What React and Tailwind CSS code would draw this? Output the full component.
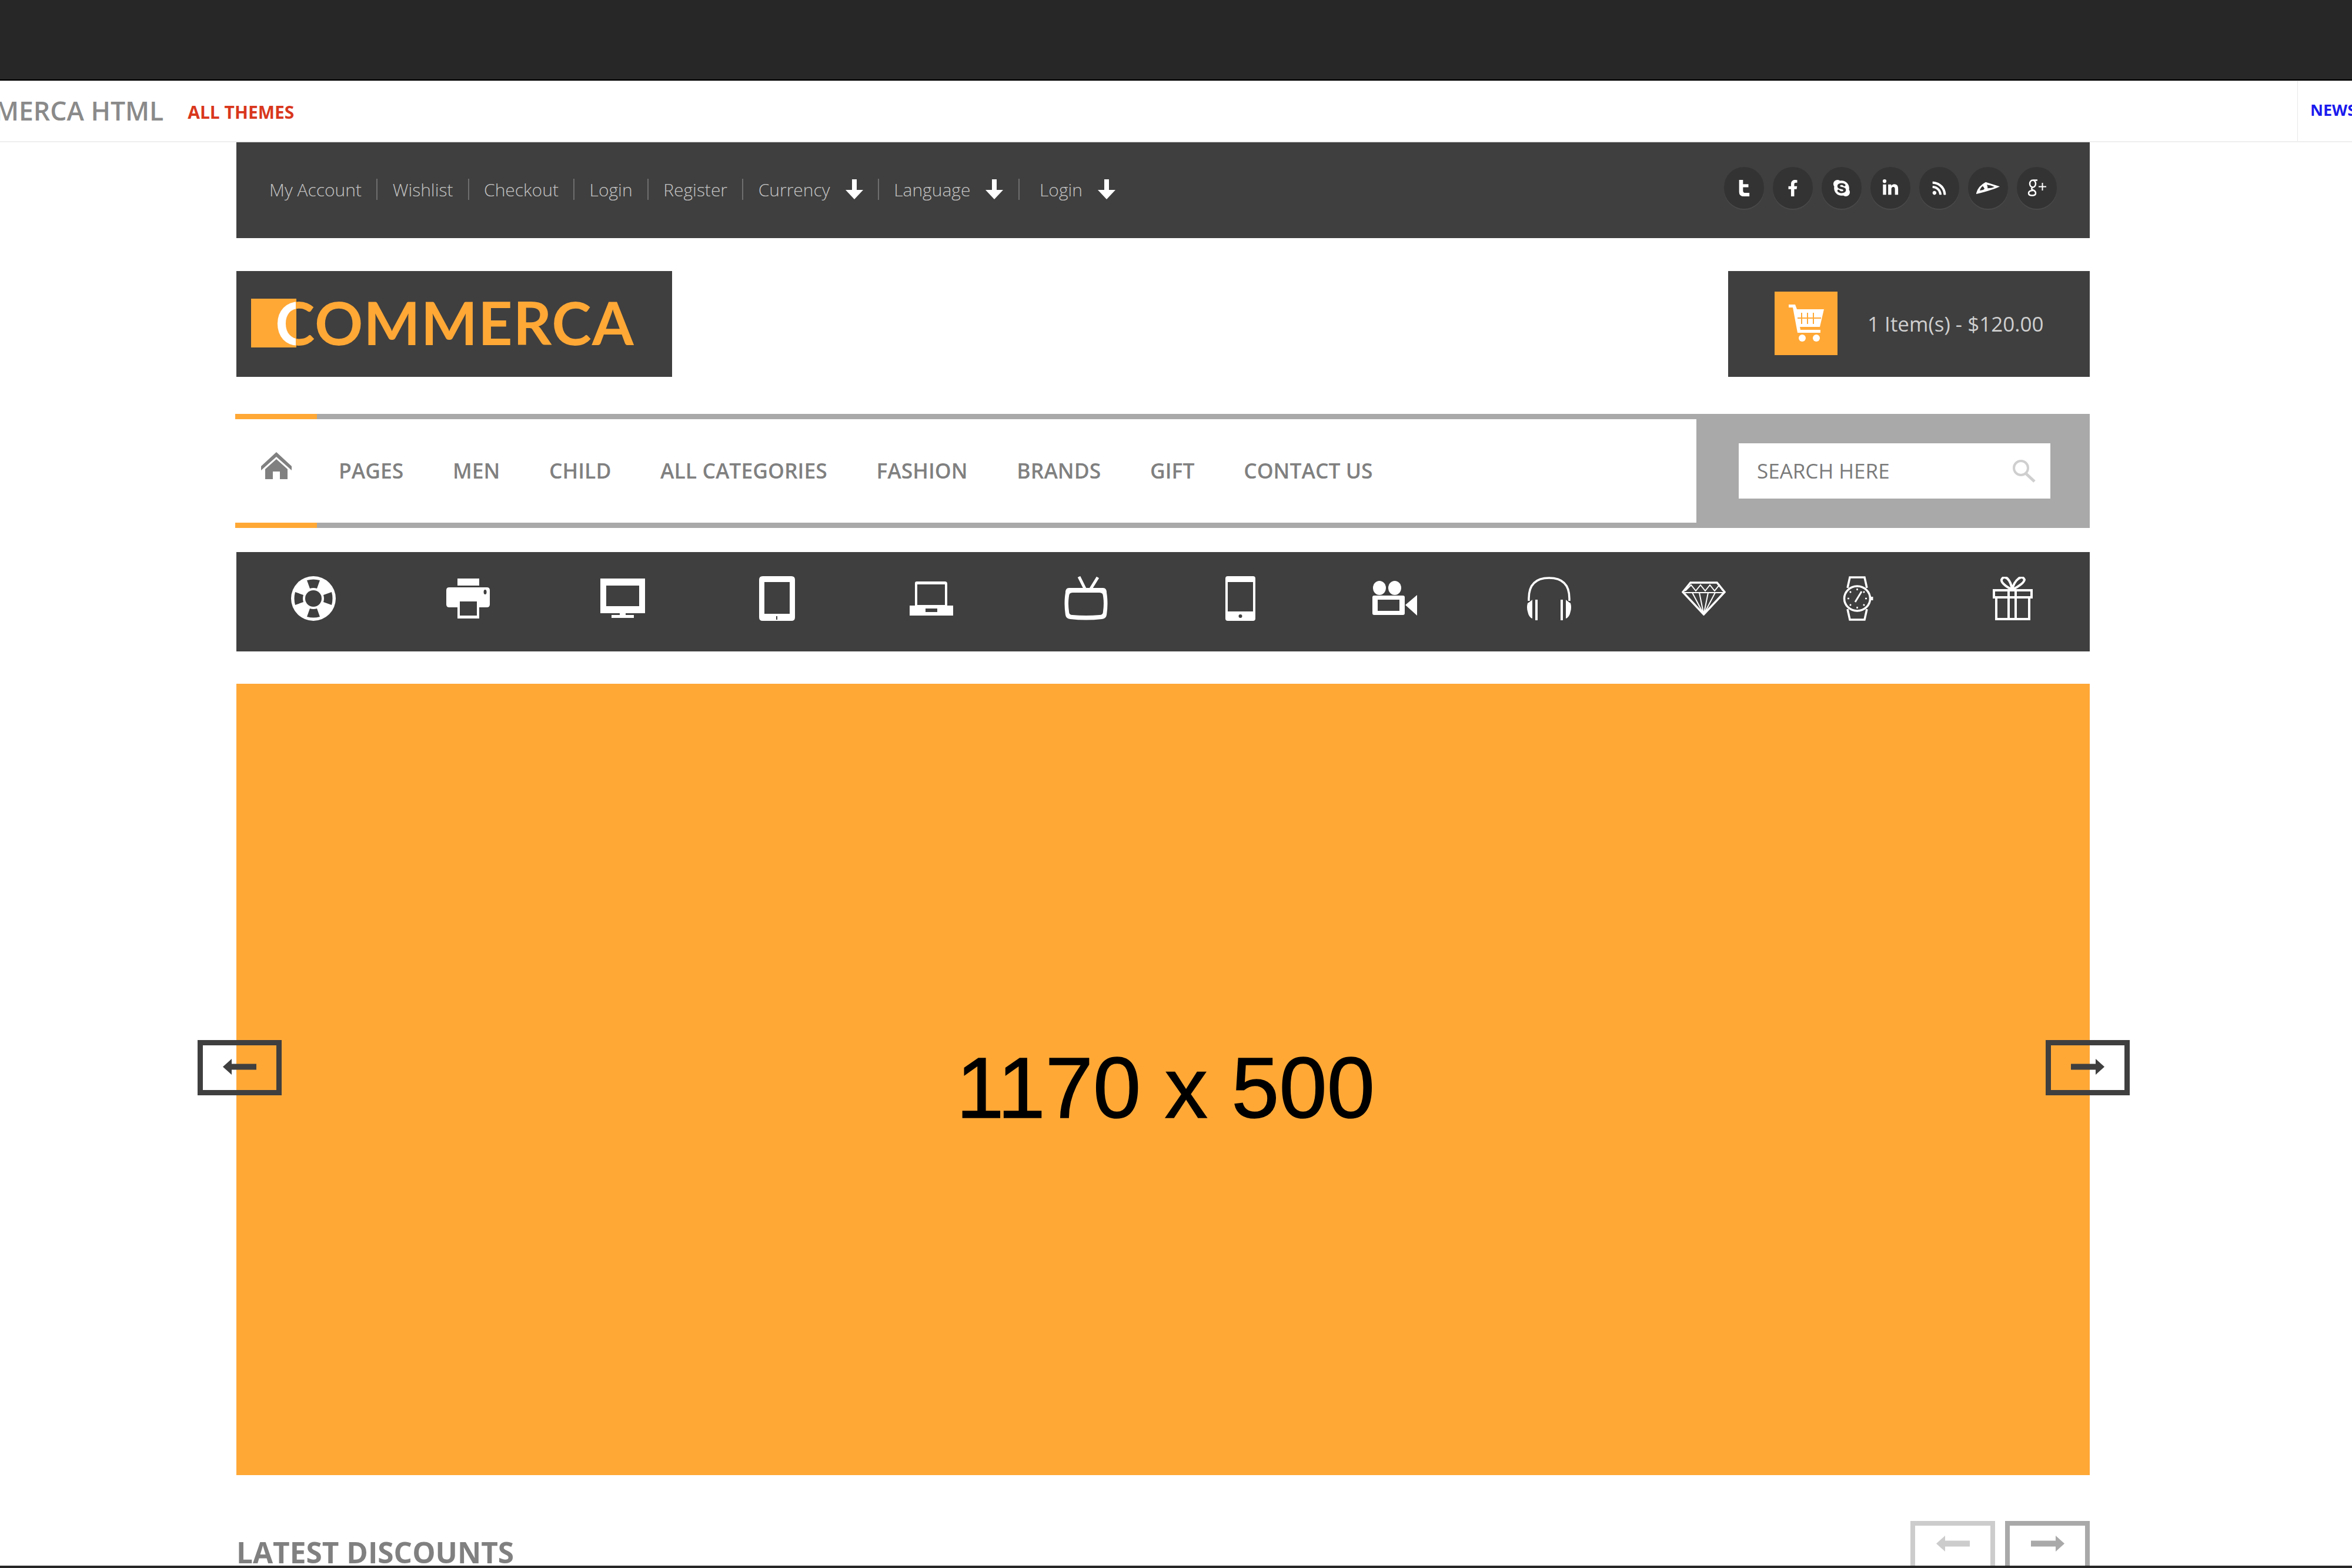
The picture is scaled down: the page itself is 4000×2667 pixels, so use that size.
import React from "react"
import { FaFacebookF, FaLinkedinIn, FaRss, FaSkype } from "react-icons/fa"

const dark = "#3f3f3f"

const TwitterT = () => (
    <svg width="20" height="28" viewBox="0 0 24 38" fill="#fff" preserveAspectRatio="none">
        <path d="M2 0 H10 V10 H21 V17 H10 V25 Q10 30 15 30 H23 V38 H12 Q2 38 2 28 Z" />
    </svg>
)

const PlaneGlyph = () => (
    <svg width="40" height="21" viewBox="0 0 40 28" fill="#fff" preserveAspectRatio="none">
        <path fillRule="evenodd" d="M0 26 Q3 10 16 1 L40 11 Q30 18 0 28 Z M6 20 Q13 19 14 16 Q12 11 11 10 Q7 14 6 20 Z M18 7 Q20 13 19 15 Q26 15 31 12 Q25 8 18 7 Z" />
    </svg>
)

const GooglePlus = () => (
    <svg width="33" height="29" viewBox="0 0 33 29" fill="none" stroke="#fff" strokeWidth="2.5">
        <ellipse cx="9" cy="7.5" rx="5" ry="6" />
        <path d="M9 14 Q5 16 9 18 Q14 20 14 23.5 Q14 27.5 8 27.5 Q2 27.5 2 23.5 Q2 19.5 9 19" />
        <path d="M10 1.5 H17" />
        <path d="M19 12.5 H32 M25.5 6 V19" strokeWidth="2" />
    </svg>
)

const DownArrow = () => (
    <svg width="30" height="34" viewBox="0 0 30 34" fill="#fff">
        <path d="M11 0 H19 V18 H30 L15 34 L0 18 H11 Z" />
    </svg>
)

const SlideArrow = ({ right, className }) => (
    <svg width="57" height="27" viewBox="0 0 57 27" fill="currentColor" className={className}>
        <path d={right ? "M57 13.5 L42 0 V8.5 H0 V18.5 H42 V27 Z" : "M0 13.5 L15 0 V8.5 H57 V18.5 H15 V27 Z"} />
    </svg>
)

const socials = [
    <TwitterT key="t" />,
    <FaFacebookF key="f" size={28} color="#fff" />,
    <FaSkype key="s" size={32} color="#fff" />,
    <FaLinkedinIn key="l" size={30} color="#fff" />,
    <FaRss key="r" size={26} color="#fff" />,
    <PlaneGlyph key="p" />,
    <GooglePlus key="g" />,
]

const links = ["My Account", "Wishlist", "Checkout", "Login", "Register"]
const menu = ["PAGES", "MEN", "CHILD", "ALL CATEGORIES", "FASHION", "BRANDS", "GIFT", "CONTACT US"]

const iconRow = [
    // lifebuoy
    <svg key="buoy" width="76" height="76" viewBox="0 0 76 76">
        <circle cx="38" cy="38" r="38" fill="#fff" />
        <circle cx="38" cy="38" r="14" fill={dark} />
        {[0, 90, 180, 270].map((r) => (
            <path key={r} transform={`rotate(${r} 38 38)`} d="M27 7 Q38 4 49 7 L44 21 Q38 19 32 21 Z" fill={dark} />
        ))}
    </svg>,
    // printer
    <svg key="print" width="74" height="68" viewBox="0 0 74 68" fill="#fff">
        <rect x="19" y="0" width="37" height="12" />
        <path fillRule="evenodd" d="M5 15 H69 Q74 15 74 20 V44 Q74 49 69 49 H5 Q0 49 0 44 V20 Q0 15 5 15 Z M66 19 A2.5 4 0 1 0 66.1 27 A2.5 4 0 1 0 66 19 Z" />
        <rect x="19" y="38" width="37" height="30" fill="#fff" />
        <rect x="23" y="39" width="29" height="24" fill={dark} />
    </svg>,
    // monitor
    <svg key="monitor" width="76" height="67" viewBox="0 0 76 67" fill="#fff">
        <path fillRule="evenodd" d="M0 0 H76 V59 H0 Z M10 12 V47 H66 V12 Z" />
        <rect x="33" y="59" width="10" height="4" />
        <rect x="19" y="62" width="38" height="5" />
    </svg>,
    // tablet
    <svg key="tablet" width="61" height="76" viewBox="0 0 61 76" fill="#fff">
        <path fillRule="evenodd" d="M6 0 H55 Q61 0 61 6 V70 Q61 76 55 76 H6 Q0 76 0 70 V6 Q0 0 6 0 Z M9 10 V64 H52 V10 Z" />
        <rect x="29" y="68" width="2" height="6" fill={dark} />
    </svg>,
    // laptop
    <svg key="laptop" width="74" height="58" viewBox="0 0 74 58" fill="#fff">
        <path fillRule="evenodd" d="M12 0 H60 Q64 0 64 4 V41 H9 V3 Q9 0 12 0 Z M13 5 V40 H60 V5 Z" />
        <path fillRule="evenodd" d="M0 41 H74 V58 H0 Z M27 46 V52 H47 V46 Z" />
    </svg>,
    // tv
    <svg key="tv" width="74" height="75" viewBox="0 0 74 75">
        <path d="M25 1 L36 23 M57 2 L44 23" stroke="#fff" strokeWidth="5" fill="none" />
        <path fillRule="evenodd" fill="#fff" d="M8 20 H66 Q72 20 72 28 Q75 46 72 66 Q71 72 64 73 Q37 76 10 73 Q3 72 2 66 Q-1 46 2 28 Q2 20 8 20 Z M14 28 Q8 28 8 34 Q6 46 8 60 Q8 66 14 66 Q37 68 60 66 Q66 66 66 60 Q68 46 66 34 Q66 28 60 28 Z" />
    </svg>,
    // phone
    <svg key="phone" width="51" height="76" viewBox="0 0 51 76" fill="#fff">
        <path fillRule="evenodd" d="M4 0 H47 Q51 0 51 4 V72 Q51 76 47 76 H4 Q0 76 0 72 V4 Q0 0 4 0 Z M4 10 V60 H47 V10 Z" />
        <circle cx="25.5" cy="68" r="3" fill={dark} />
    </svg>,
    // video camera
    <svg key="camera" width="76" height="59" viewBox="0 0 76 59" fill="#fff">
        <ellipse cx="12" cy="12" rx="11" ry="12" />
        <ellipse cx="38" cy="12" rx="11" ry="12" />
        <path fillRule="evenodd" d="M3 25 H52 Q55 25 55 28 V55 Q55 58 52 58 H3 Q0 58 0 55 V28 Q0 25 3 25 Z M9 32 V51 H46 V32 Z" />
        <path d="M56 41 L76 24 V59 Z" />
    </svg>,
    // headphones
    <svg key="headphones" width="77" height="75" viewBox="0 0 77 75">
        <path d="M4 42 V38 Q4 3 38.5 3 Q73 3 73 38 V42" stroke="#fff" strokeWidth="3.5" fill="none" />
        <path d="M2 46 Q8 42 10 40 V72 Q4 70 2 60 Q0 53 2 46 Z M75 46 Q69 42 67 40 V72 Q73 70 75 60 Q77 53 75 46 Z" fill="#fff" />
        <rect x="15" y="40" width="4" height="35" fill="#fff" />
        <rect x="58" y="40" width="4" height="35" fill="#fff" />
    </svg>,
    // diamond
    <svg key="diamond" width="75" height="58" viewBox="0 0 75 58" fill="none" stroke="#fff" strokeWidth="2.5">
        <path d="M15 2 H60 L73 18 L37.5 56 L2 18 Z" strokeWidth="3.5" />
        <path d="M2 19 H73 M6 16 L16 6 L24 16 L32 6 L40 16 L48 6 L56 16 L64 6 L70 16" strokeWidth="2" />
        <path d="M18 19 L37.5 56 M30 19 L37.5 56 M45 19 L37.5 56 M57 19 L37.5 56" strokeWidth="2" />
    </svg>,
    // watch
    <svg key="watch" width="53" height="76" viewBox="0 0 53 76" fill="none" stroke="#fff">
        <path d="M9 20 L13 2 H38 L42 20 M9 56 L13 74 H38 L42 56" strokeWidth="3.5" />
        <ellipse cx="25.5" cy="38" rx="22" ry="21" strokeWidth="3.5" />
        <path d="M50 35 V41" strokeWidth="5" />
        <path d="M22 44 L33 26" strokeWidth="3" />
        <path d="M25.5 21 V24 M25.5 52 V55 M9 38 H12 M39 38 H42 M13 26 L15 28 M38 26 L36 28 M13 50 L15 48 M38 50 L36 48" strokeWidth="2.5" />
    </svg>,
    // gift
    <svg key="gift" width="68" height="74" viewBox="0 0 68 74" fill="none" stroke="#fff" strokeWidth="4">
        <path d="M2 23 H66 V35 H2 Z" />
        <path d="M6 35 V72 H62 V35" />
        <path d="M27 23 V72 M39 23 V72" />
        <path d="M33 22 Q14 12 15 5 Q18 -2 25 3 Q31 9 33 22 Q36 9 44 3 Q51 -2 54 5 Q53 12 33 22 Z" />
    </svg>,
]

const App = () => {
    return (
        <div className="w-full h-[2667px] flex flex-col overflow-hidden bg-white font-['Open_Sans',sans-serif]">
            {/* Demo bar */}
            <div className="h-[135px] shrink-0 bg-[#272727] border-b-[2px] border-black box-content"></div>
            <div className="h-[105px] shrink-0 flex items-center border-t border-t-[#bbbbbb] border-b-2 border-b-[#eeeeee] overflow-hidden">
                <span className="-ml-[9px] -mt-[2px] text-[44.5px] leading-none font-semibold text-[#8a8a8a] whitespace-nowrap">MERCA HTML</span>
                <span className="ml-[41px] mt-[4px] text-[30px] leading-none font-bold text-[#d9371d] whitespace-nowrap">ALL THEMES</span>
                <div className="ml-auto w-[93px] h-full shrink-0 border-l border-[#e8e8e8] flex items-center pl-[21px] overflow-hidden">
                    <span className="-mt-[6px] text-[27px] leading-none font-bold text-[#1a1aee] whitespace-nowrap">NEWS</span>
                </div>
            </div>

            {/* Page */}
            <div className="flex-1 min-h-0 overflow-hidden">
                <div className="w-[3152px] ml-[402px] flex flex-col">
                    {/* Top links */}
                    <div className="h-[163px] flex items-center justify-between bg-[#3f3f3f] pl-[56px] pr-[56px] text-[30px] font-light text-[#c4c4c4]">
                        <div className="-mt-[3px] flex items-center gap-[25.3px]">
                            {links.map((link) => (
                                <React.Fragment key={link}>
                                    <span>{link}</span>
                                    <span className="w-[2px] h-[36px] bg-[#6e6e6e]"></span>
                                </React.Fragment>
                            ))}
                            <span className="flex items-center gap-[26px]">Currency <DownArrow /></span>
                            <span className="w-[2px] h-[36px] bg-[#6e6e6e]"></span>
                            <span className="flex items-center gap-[26px]">Language <DownArrow /></span>
                            <span className="w-[2px] h-[36px] bg-[#6e6e6e]"></span>
                            <span className="ml-[9px] flex items-center gap-[26px]">Login <DownArrow /></span>
                        </div>
                        <div className="-mt-[8px] flex items-center gap-[15px]">
                            {socials.map((icon, index) => (
                                <div key={index} className="w-[68px] h-[71px] rounded-full bg-[#333333] shadow-[0_2px_0_#4a4a4a] flex items-center justify-center">
                                    {icon}
                                </div>
                            ))}
                        </div>
                    </div>

                    {/* Logo and cart */}
                    <div className="mt-[56px] h-[180px] flex justify-between">
                        <div className="w-[741px] bg-[#3f3f3f] flex items-center pl-[25px]">
                            <div className="w-[77px] h-[83px] -mt-[3px] bg-[#ffa836] shrink-0"></div>
                            <span className="-ml-[36px] -mt-[6px] text-[102px] leading-none font-bold font-['Lato',sans-serif] tracking-[1px] text-transparent bg-clip-text bg-[linear-gradient(90deg,#ffffff_0,#ffffff_35px,#ffa836_35px)]">COMMERCA</span>
                        </div>
                        <div className="w-[615px] bg-[#3f3f3f] flex items-center pl-[79px]">
                            <div className="w-[107px] h-[108px] -mt-[2px] bg-[#ffa836] flex items-center justify-center">
                                <svg width="60" height="64" viewBox="0 0 60 64" fill="#fff">
                                    <path d="M0 0 H11 L14 8 H60 L53 38 H19 L20 43 H54 V48 H15 L7 5 H0 Z" />
                                    <path d="M22 14 V33 M32 14 V33 M42 14 V33 M15 23 H55" stroke="#ffa836" strokeWidth="2" />
                                    <circle cx="23" cy="57" r="6" />
                                    <circle cx="47" cy="57" r="6" />
                                </svg>
                            </div>
                            <span className="ml-[51px] text-[35px] text-[#cfcfcf] whitespace-nowrap">1 Item(s) - $120.00</span>
                        </div>
                    </div>

                    {/* Main menu */}
                    <div className="mt-[63px] -ml-[2px] w-[3154px] h-[194px] flex bg-[#a9a9a9]">
                        <div className="flex-1 my-[9px] bg-white flex items-center">
                            <div className="w-[139px] h-[194px] -my-[9px] border-y-[9px] border-[#ffa836] bg-white flex items-center justify-center shrink-0">
                                <svg width="52" height="46" viewBox="0 0 52 46" fill="#808080" className="-mt-[18px]">
                                    <path d="M26 0 L52 24 V31 L26 8 L0 31 V24 Z" />
                                    <path d="M26 12 L45 29 V46 H32 V33 H20 V46 H7 V29 Z" />
                                </svg>
                            </div>
                            <div className="pl-[37px] flex items-center gap-[83.7px] text-[35.5px] font-semibold text-[#808080] whitespace-nowrap">
                                {menu.map((item) => (
                                    <span key={item}>{item}</span>
                                ))}
                            </div>
                        </div>
                        <div className="w-[669px] flex items-center justify-end pr-[67px]">
                            <div className="w-[530px] h-[94px] bg-white flex items-center justify-between pl-[31px] pr-[25px]">
                                <span className="text-[35px] text-[#7a7a7a]">SEARCH HERE</span>
                                <svg width="40" height="40" viewBox="0 0 40 40" fill="none" stroke="#cfcfcf">
                                    <circle cx="15" cy="15" r="12" strokeWidth="4" />
                                    <path d="M24 25 L38 38" strokeWidth="5" />
                                </svg>
                            </div>
                        </div>
                    </div>

                    {/* Category icons */}
                    <div className="mt-[41px] h-[169px] grid grid-cols-12 items-center bg-[#3f3f3f] pb-[12px]">
                        {iconRow.map((icon, index) => (
                            <div key={index} className="flex justify-center">{icon}</div>
                        ))}
                    </div>

                    {/* Slider */}
                    <div className="relative mt-[55px] h-[1346px] bg-[#ffa836] flex items-center justify-center pt-[30px] pl-[8px]">
                        <span className="text-[146px] leading-none font-['Liberation_Sans',sans-serif] text-black [-webkit-text-stroke:1.5px_black]">1170 x 500</span>
                        <div className="absolute -left-[66px] top-[606px] w-[143px] h-[94px] border-[9px] border-[#3f3f3f] flex items-center justify-center text-[#3f3f3f]">
                            <SlideArrow className="-mt-[4px]" />
                        </div>
                        <div className="absolute -right-[68px] top-[606px] w-[143px] h-[94px] border-[9px] border-[#3f3f3f] flex items-center justify-center text-[#3f3f3f]">
                            <SlideArrow right className="-mt-[4px]" />
                        </div>
                    </div>

                    {/* Latest discounts heading */}
                    <div className="mt-[78px] flex justify-between">
                        <h2 className="mt-[29px] text-[49.5px] leading-none font-bold text-[#808080]">LATEST DISCOUNTS</h2>
                        <div className="flex gap-[17px]">
                            <div className="w-[144px] h-[94px] border-[8px] border-[#cccccc] flex items-center justify-center text-[#cccccc]">
                                <SlideArrow className="-mt-[18px]" />
                            </div>
                            <div className="w-[144px] h-[94px] border-[8px] border-[#a9a9a9] flex items-center justify-center text-[#a9a9a9]">
                                <SlideArrow right className="-mt-[18px]" />
                            </div>
                        </div>
                    </div>
                </div>
            </div>
            <div className="h-[4px] shrink-0 bg-[#272727]"></div>
        </div>
    )
}

export default App
